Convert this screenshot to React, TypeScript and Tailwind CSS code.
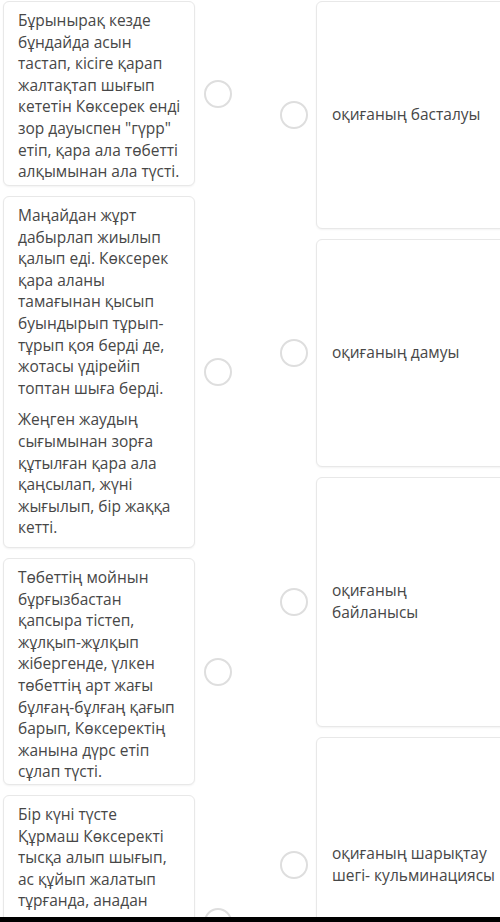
import React, { useState } from "react";

type LeftItem = {
  id: number;
  paragraphs: string[];
  height: string;
};

type RightItem = {
  id: number;
  label: React.ReactNode;
  height: string;
};

const leftItems: LeftItem[] = [
  {
    id: 1,
    paragraphs: [
      'Бұрынырақ кезде бұндайда асын тастап, кісіге қарап жалтақтап шығып кететін Көксерек енді зор дауыспен "гүрр" етіп, қара ала төбетті алқымынан ала түсті.',
    ],
    height: "h-[185px]",
  },
  {
    id: 2,
    paragraphs: [
      "Маңайдан жұрт дабырлап жиылып қалып еді. Көксерек қара аланы тамағынан қысып буындырып тұрып-тұрып қоя берді де, жотасы үдірейіп топтан шыға берді.",
      "Жеңген жаудың сығымынан зорға құтылған қара ала қаңсылап, жүні жығылып, бір жаққа кетті.",
    ],
    height: "h-[352px]",
  },
  {
    id: 3,
    paragraphs: [
      "Төбеттің мойнын бұрғызбастан қапсыра тістеп, жұлқып-жұлқып жібергенде, үлкен төбеттің арт жағы бұлғаң-бұлғаң қағып барып, Көксеректің жанына дүрс етіп сұлап түсті.",
    ],
    height: "h-[227px]",
  },
  {
    id: 4,
    paragraphs: [
      "Бір күні түсте Құрмаш\u00a0Көксеректі тысқа алып шығып, ас құйып жалатып тұрғанда, анадан ауылдың үлкен қара ала төбеті келіп, Көксеректің асына тұмсығын сұқты.",
    ],
    height: "h-[253px]",
  },
];

const rightItems: RightItem[] = [
  { id: 1, label: "оқиғаның басталуы", height: "h-[228px]" },
  { id: 2, label: "оқиғаның дамуы", height: "h-[228px]" },
  { id: 3, label: "оқиғаның байланысы", height: "h-[250px]" },
  {
    id: 4,
    label: (
      <>
        оқиғаның шарықтау{" "}
        <span className="whitespace-nowrap">шегі- кульминациясы</span>
      </>
    ),
    height: "h-[256px]",
  },
];

function Radio({ checked, onClick }: { checked: boolean; onClick: () => void }) {
  return (
    <button
      type="button"
      onClick={onClick}
      className={`w-7 h-7 shrink-0 rounded-full border-2 bg-white ${
        checked ? "border-[#5a8dee]" : "border-[#dedede]"
      }`}
    />
  );
}

function App() {
  const [leftPick, setLeftPick] = useState<number | null>(null);
  const [rightPick, setRightPick] = useState<number | null>(null);

  return (
    <div className="relative w-[500px] h-[922px] overflow-hidden bg-white font-['Open_Sans',sans-serif] text-[15.5px] leading-[21.6px] text-[#474747]">
      <div className="flex pt-[1px]">
        {/* statements column */}
        <div className="flex flex-col gap-[10px] pl-[3px] shrink-0">
          {leftItems.map((item) => (
            <div key={item.id} className="flex items-center gap-[9px]">
              <div
                className={`w-[192px] ${item.height} shrink-0 rounded-md border border-[#e8e8e8] bg-white shadow-[0_1px_2px_rgba(0,0,0,0.05)] pl-[14px] pr-[10px] pt-[8px]`}
              >
                {item.paragraphs.map((p, i) => (
                  <p key={i} className={i > 0 ? "mt-[10px]" : ""}>
                    {p}
                  </p>
                ))}
              </div>
              <Radio
                checked={leftPick === item.id}
                onClick={() => setLeftPick(item.id)}
              />
            </div>
          ))}
        </div>

        {/* answers column */}
        <div className="flex flex-col gap-[10px] ml-[48px] shrink-0">
          {rightItems.map((item) => (
            <div key={item.id} className="flex items-center gap-[8px]">
              <Radio
                checked={rightPick === item.id}
                onClick={() => setRightPick(item.id)}
              />
              <div
                className={`w-[196px] ${item.height} shrink-0 flex items-center rounded-md border border-[#e8e8e8] bg-white shadow-[0_1px_2px_rgba(0,0,0,0.05)] pl-[15px] pr-[17px]`}
              >
                <span>{item.label}</span>
              </div>
            </div>
          ))}
        </div>
      </div>

      <div className="absolute bottom-0 left-0 right-0 h-[5px] bg-black" />
    </div>
  );
}

export default App;
